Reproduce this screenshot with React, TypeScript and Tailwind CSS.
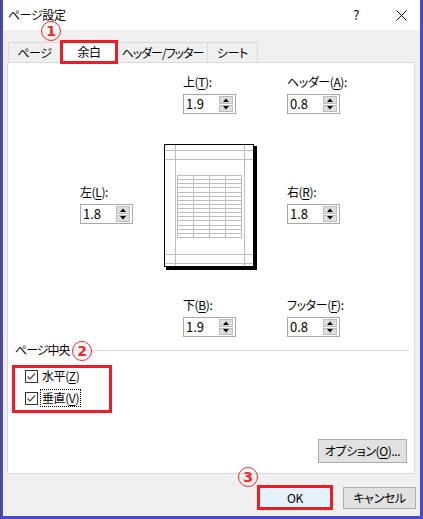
import React from "react";

function U({ c }: { c: string }) {
  return <span className="underline decoration-1 underline-offset-[2px]">{c}</span>;
}

function Arrow({ up }: { up?: boolean }) {
  return (
    <svg width="6" height="4" className="block">
      {up ? <path d="M0 4 L3 0.5 L6 4 Z" fill="#000" /> : <path d="M0 0 L3 3.5 L6 0 Z" fill="#000" />}
    </svg>
  );
}

function Spin({ label, value }: { label: React.ReactNode; value: string }) {
  return (
    <div className="flex flex-col w-[53px]">
      <div className="h-[16px] leading-[16px] whitespace-nowrap">{label}</div>
      <div className="mt-[4px] h-[20px] border border-[#a9a9a9] bg-white flex items-center">
        <span className="flex-1 pl-[2px] leading-[18px] text-[13px] tracking-normal">{value}</span>
        <div className="w-[14px] h-[16px] mr-[2px] flex flex-col gap-[1px]">
          <div className="flex-1 bg-[#dedede] border border-[#bcbcbc] flex items-center justify-center">
            <Arrow up />
          </div>
          <div className="flex-1 bg-[#dedede] border border-[#bcbcbc] flex items-center justify-center">
            <Arrow />
          </div>
        </div>
      </div>
    </div>
  );
}

function Preview() {
  const rows: number[] = [];
  for (let i = 0; i <= 15; i++) rows.push(Math.round(31 + (i * 62) / 15) + 0.5);
  const cols = [13.5, 29.5, 45.5, 61.5, 77.5];
  const g = "#bdbdbd";
  return (
    <svg width="93" height="126" className="block shrink-0">
      <rect x="2" y="2" width="91" height="124" fill="#000" />
      <rect x="0.5" y="0.5" width="89" height="122" fill="#fff" stroke="#000" />
      <line x1="11.5" y1="1" x2="11.5" y2="122" stroke={g} />
      <line x1="80.5" y1="1" x2="80.5" y2="122" stroke={g} />
      <line x1="1" y1="6.5" x2="89" y2="6.5" stroke={g} />
      <line x1="1" y1="15.5" x2="89" y2="15.5" stroke={g} />
      <line x1="1" y1="110.5" x2="89" y2="110.5" stroke={g} />
      <line x1="1" y1="119.5" x2="89" y2="119.5" stroke={g} />
      {rows.map((y, i) => (
        <line key={"r" + i} x1="13" y1={y} x2="78" y2={y} stroke={g} />
      ))}
      {cols.map((x, i) => (
        <line key={"c" + i} x1={x} y1={rows[0]} x2={x} y2={rows[rows.length - 1]} stroke={g} />
      ))}
    </svg>
  );
}

function CheckBox() {
  return (
    <svg width="13" height="13" className="block shrink-0">
      <rect x="0.5" y="0.5" width="12" height="12" fill="#fff" stroke="#333" />
      <path d="M2.5 6.5 L5 9 L10 3.5" fill="none" stroke="#555" strokeWidth="1.3" />
    </svg>
  );
}

function Circle({ n, cls }: { n: string; cls: string }) {
  return (
    <div
      className={
        "absolute w-[20px] h-[20px] rounded-full border-[1.5px] border-[#ee2a2a] flex items-center justify-center text-[#ee2a2a] font-bold text-[14px] leading-none tracking-normal font-['DejaVu_Sans',sans-serif] " +
        cls
      }
    >
      {n}
    </div>
  );
}

export default function App() {
  return (
    <div className="relative w-[423px] h-[519px] flex text-[12px] text-black tracking-[-0.4px] font-['Noto_Sans_CJK_JP','Noto_Sans',sans-serif] [font-feature-settings:'palt']">
      <div className="w-[1px] h-full bg-[#505050]" />
      <div className="flex-1 flex flex-col border-l-2 border-r-[3px] border-b-[3px] border-[#4848d4] bg-[#f0f0f0]">
        {/* title bar */}
        <div className="h-[30px] bg-white flex items-center pl-[5px] shrink-0">
          <span>ページ設定</span>
          <span className="ml-auto text-[13px]">?</span>
          <svg width="11" height="11" className="ml-[37px] mr-[13px] block">
            <path d="M0.5 0.5 L10.5 10.5 M10.5 0.5 L0.5 10.5" stroke="#000" strokeWidth="1" />
          </svg>
        </div>

        {/* body */}
        <div className="flex-1 flex flex-col pt-[10px]">
          {/* tabs */}
          <div className="relative z-10 flex items-end h-[22px] ml-[5px]">
            <div className="w-[52px] h-[20px] border-t border-l border-[#d9d9d9] bg-[#f0f0f0] flex items-center justify-center">
              ページ
            </div>
            <div className="w-[58px] h-[24px] mb-[-2px] border-[3px] border-[#ee1c24] bg-white flex items-center justify-center">
              余白
            </div>
            <div className="w-[89px] h-[20px] border-t border-[#d9d9d9] bg-[#f0f0f0] flex items-center justify-center whitespace-nowrap tracking-[-1px]">
              ヘッダー/フッター
            </div>
            <div className="w-[51px] h-[20px] border-t border-l border-r border-[#d9d9d9] bg-[#f0f0f0] flex items-center justify-center">
              シート
            </div>
          </div>

          {/* panel */}
          <div className="ml-[4px] mr-[5px] h-[412px] border border-[#d9d9d9] bg-white flex flex-col">
            {/* row 1 */}
            <div className="flex pt-[11px] pl-[175px]">
              <Spin label={<>上(<U c="T" />):</>} value="1.9" />
              <div className="ml-[51px]">
                <Spin label={<>ヘッダー(<U c="A" />):</>} value="0.8" />
              </div>
            </div>
            {/* row 2 */}
            <div className="flex items-start mt-[30px] pl-[72px]">
              <div className="mt-[40px]">
                <Spin label={<>左(<U c="L" />):</>} value="1.8" />
              </div>
              <div className="ml-[31px]">
                <Preview />
              </div>
              <div className="ml-[30px] mt-[40px]">
                <Spin label={<>右(<U c="R" />):</>} value="1.8" />
              </div>
            </div>
            {/* row 3 */}
            <div className="flex mt-[27px] pl-[175px]">
              <Spin label={<>下(<U c="B" />):</>} value="1.9" />
              <div className="ml-[51px]">
                <Spin label={<>フッター(<U c="F" />):</>} value="0.8" />
              </div>
            </div>

            {/* center section */}
            <div className="flex items-center mt-[5px] h-[16px] pl-[7px] pr-[5px]">
              <span className="leading-[16px] tracking-[-1px]">ページ中央</span>
              <div className="flex-1 h-[1px] bg-[#dcdcdc] ml-[3px]" />
            </div>
            <div className="ml-[4px] mt-[7px] w-[100px] h-[48px] border-[3px] border-[#ee1c24] flex flex-col gap-[6px] pl-[10px]">
              <div className="h-[16px] flex items-center">
                <CheckBox />
                <span className="ml-[2px] px-[1px] border border-transparent leading-[16px]">
                  水平(<U c="Z" />)
                </span>
              </div>
              <div className="h-[16px] flex items-center">
                <CheckBox />
                <span className="ml-[2px] px-[1px] border border-dotted border-black leading-[16px]">
                  垂直(<U c="V" />)
                </span>
              </div>
            </div>

            <div className="mt-auto mb-[10px] self-end mr-[7px] w-[89px] h-[24px] border border-[#adadad] bg-[#e1e1e1] flex items-center justify-center whitespace-nowrap">
              オプション(<U c="O" />)...
            </div>
          </div>

          {/* buttons */}
          <div className="mt-[11px] flex justify-end items-center gap-[10px] pr-[4px]">
            <div className="w-[76px] h-[25px] border-[3px] border-[#ee1c24] bg-[#e5f1fb] flex items-center justify-center">
              OK
            </div>
            <div className="w-[73px] h-[22px] border border-[#adadad] bg-[#e1e1e1] flex items-center justify-center">
              キャンセル
            </div>
          </div>
        </div>
      </div>

      <Circle n="1" cls="left-[41px] top-[21px]" />
      <Circle n="2" cls="left-[72px] top-[341px]" />
      <Circle n="3" cls="left-[238px] top-[467px]" />
    </div>
  );
}
